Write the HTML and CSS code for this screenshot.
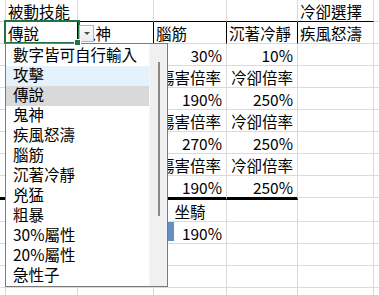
FILE: index.html
```html
<!DOCTYPE html>
<html>
<head>
    <meta charset="UTF-8">
    <title>被動技能</title>
    <link rel="stylesheet" href="styles.css">
</head>
<body>
    <div class="sheet">
        <div class="row">
            <div></div><div>被動技能</div><div class="hb"></div><div class="hb"></div><div class="hb"></div><div class="hb">冷卻選擇</div><div></div>
        </div>
        <div class="row">
            <div></div><div class="vb">傳說</div><div class="vb">鬼神</div><div class="vb">腦筋</div><div class="vb">沉著冷靜</div><div>疾風怒濤</div><div></div>
        </div>
        <div class="row">
            <div></div><div></div><div></div><div class="num">30%</div><div class="num">10%</div><div></div><div></div>
        </div>
        <div class="row">
            <div></div><div></div><div></div><div class="ctr">傷害倍率</div><div class="ctr">冷卻倍率</div><div></div><div></div>
        </div>
        <div class="row">
            <div></div><div></div><div></div><div class="num">190%</div><div class="num">250%</div><div></div><div></div>
        </div>
        <div class="row">
            <div></div><div></div><div></div><div class="ctr">傷害倍率</div><div class="ctr">冷卻倍率</div><div></div><div></div>
        </div>
        <div class="row">
            <div></div><div></div><div></div><div class="num">270%</div><div class="num">250%</div><div></div><div></div>
        </div>
        <div class="row">
            <div></div><div></div><div></div><div class="ctr">傷害倍率</div><div class="ctr">冷卻倍率</div><div></div><div></div>
        </div>
        <div class="row total">
            <div class="tb"></div><div class="tb"></div><div class="tb"></div><div class="tb num">190%</div><div class="tb num">250%</div><div class="plain"></div><div class="plain"></div>
        </div>
        <div class="row">
            <div></div><div></div><div></div><div class="ctr">坐騎</div><div></div><div></div><div></div>
        </div>
        <div class="row">
            <div></div><div></div><div></div><div class="bar"><span class="databar"></span><span class="value">190%</span></div><div></div><div></div><div></div>
        </div>
        <div class="row">
            <div></div><div></div><div></div><div></div><div></div><div></div><div></div>
        </div>
        <div class="row">
            <div></div><div></div><div></div><div></div><div></div><div></div><div></div>
        </div>
        <div class="row">
            <div></div><div></div><div></div><div></div><div></div><div></div><div></div>
        </div>

        <!-- 選取的儲存格與下拉清單 -->
        <div class="selection"></div>
        <div class="dd-button"><span class="arrow"></span></div>
        <div class="dropdown">
            <ul>
                <li>數字皆可自行輸入</li>
                <li class="hover">攻擊</li>
                <li class="selected">傳說</li>
                <li>鬼神</li>
                <li>疾風怒濤</li>
                <li>腦筋</li>
                <li>沉著冷靜</li>
                <li>兇猛</li>
                <li>粗暴</li>
                <li>30%屬性</li>
                <li>20%屬性</li>
                <li>急性子</li>
            </ul>
            <div class="scrollbar"><div class="thumb"></div></div>
        </div>
        <div class="fill-handle"></div>
    </div>
</body>
</html>
```

FILE: styles.css
```css
body {
    margin: 0;
    background: #fff;
    font-family: "Noto Sans CJK TC", "Noto Sans", sans-serif;
    font-size: 15.5px;
    color: #000;
}

.sheet {
    position: relative;
    width: 379px;
    height: 295px;
    overflow: hidden;
}

.row {
    display: grid;
    grid-template-columns: 6px 72px 76px 73px 71px 76px 1fr;
    height: 22px;
}

.row > div {
    box-sizing: border-box;
    border-right: 1px solid #dadada;
    border-bottom: 1px solid #dadada;
    padding: 1px 2px 0;
    line-height: 21px;
    white-space: nowrap;
    overflow: hidden;
}

.row > div:last-child {
    border-right: none;
}

.row > .hb {
    border-bottom-color: #000;
}

.row > .vb {
    border-right-color: #000;
}

.row > .num {
    text-align: right;
    padding-right: 4px;
}

.row > .ctr {
    text-align: center;
}

.row.total {
    height: 24px;
}

.row > .tb {
    border-bottom: 3px solid #000;
}

.row > .plain {
    margin-bottom: 2px;
}

.row > .bar {
    display: flex;
    align-items: flex-start;
    padding-right: 4px;
}

.databar {
    width: 18px;
    height: 19px;
    margin-top: -1px;
    background: #638ec6;
}

.value {
    margin-left: auto;
}

.selection {
    position: absolute;
    left: 4px;
    top: 20px;
    width: 76px;
    height: 24px;
    box-sizing: border-box;
    border: 2px solid #217346;
}

.fill-handle {
    position: absolute;
    left: 74px;
    top: 39px;
    width: 7px;
    height: 7px;
    box-sizing: border-box;
    background: #217346;
    border: 1px solid #fff;
}

.dd-button {
    position: absolute;
    left: 79px;
    top: 25px;
    width: 15px;
    height: 17px;
    box-sizing: border-box;
    border: 1px solid #b4b4b4;
    background: linear-gradient(#fcfcfc, #ececec);
    display: flex;
    align-items: center;
    justify-content: center;
}

.arrow {
    width: 0;
    height: 0;
    border-left: 3px solid transparent;
    border-right: 3px solid transparent;
    border-top: 3px solid #4a4a4a;
}

.dropdown {
    position: absolute;
    left: 5px;
    top: 43px;
    width: 163px;
    height: 244px;
    box-sizing: border-box;
    border: 1px solid #7a7a7a;
    background: #fff;
    display: flex;
}

.dropdown ul {
    flex: 1;
    margin: 0;
    padding: 2px 0 0;
    list-style: none;
}

.dropdown li {
    height: 20px;
    line-height: 16px;
    padding-left: 7px;
    white-space: nowrap;
}

.dropdown li.hover {
    background: #e5f1fb;
}

.dropdown li.selected {
    background: #d9d9d9;
}

.scrollbar {
    width: 17px;
    padding-top: 18px;
    background: #f0f0f0;
    border-left: 1px solid #f7f7f7;
}

.thumb {
    width: 2px;
    height: 154px;
    margin-left: 8px;
    background: #888;
}
```
